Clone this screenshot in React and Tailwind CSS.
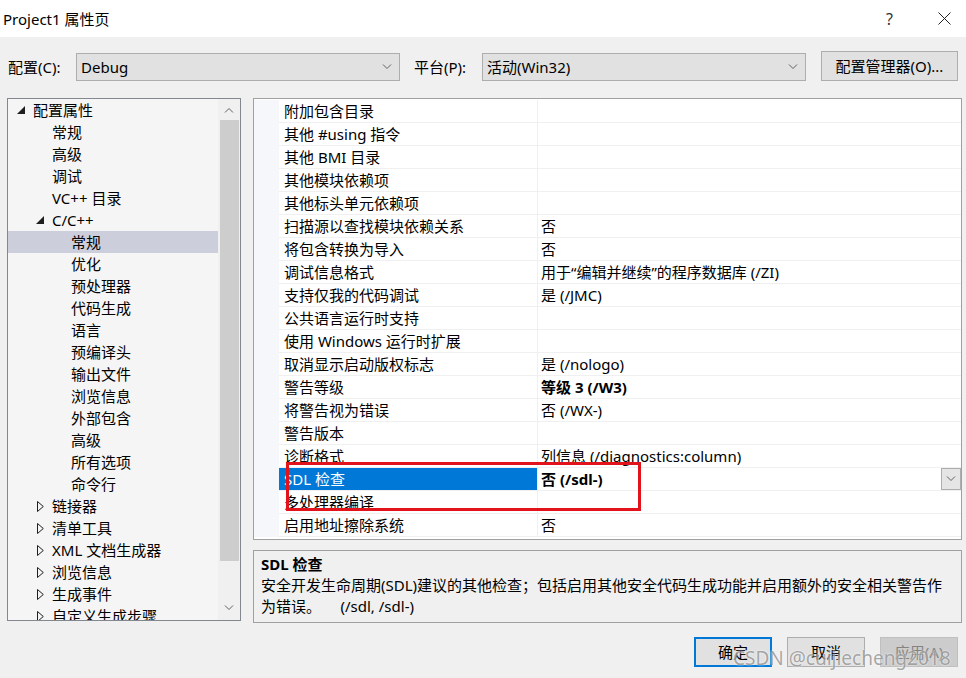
import React from 'react';

const FONT = "font-['Noto_Sans','Noto_Sans_CJK_SC',sans-serif]";

const tree = [
  { t: '配置属性', lvl: 0, icon: 'open' },
  { t: '常规', lvl: 1 },
  { t: '高级', lvl: 1 },
  { t: '调试', lvl: 1 },
  { t: 'VC++ 目录', lvl: 1 },
  { t: 'C/C++', lvl: 1, icon: 'open' },
  { t: '常规', lvl: 2, sel: true },
  { t: '优化', lvl: 2 },
  { t: '预处理器', lvl: 2 },
  { t: '代码生成', lvl: 2 },
  { t: '语言', lvl: 2 },
  { t: '预编译头', lvl: 2 },
  { t: '输出文件', lvl: 2 },
  { t: '浏览信息', lvl: 2 },
  { t: '外部包含', lvl: 2 },
  { t: '高级', lvl: 2 },
  { t: '所有选项', lvl: 2 },
  { t: '命令行', lvl: 2 },
  { t: '链接器', lvl: 1, icon: 'closed' },
  { t: '清单工具', lvl: 1, icon: 'closed' },
  { t: 'XML 文档生成器', lvl: 1, icon: 'closed' },
  { t: '浏览信息', lvl: 1, icon: 'closed' },
  { t: '生成事件', lvl: 1, icon: 'closed' },
  { t: '自定义生成步骤', lvl: 1, icon: 'closed' },
];

const props = [
  ['附加包含目录', ''],
  ['其他 #using 指令', ''],
  ['其他 BMI 目录', ''],
  ['其他模块依赖项', ''],
  ['其他标头单元依赖项', ''],
  ['扫描源以查找模块依赖关系', '否'],
  ['将包含转换为导入', '否'],
  ['调试信息格式', '用于“编辑并继续”的程序数据库 (/ZI)'],
  ['支持仅我的代码调试', '是 (/JMC)'],
  ['公共语言运行时支持', ''],
  ['使用 Windows 运行时扩展', ''],
  ['取消显示启动版权标志', '是 (/nologo)'],
  ['警告等级', '等级 3 (/W3)', true],
  ['将警告视为错误', '否 (/WX-)'],
  ['警告版本', ''],
  ['诊断格式', '列信息 (/diagnostics:column)'],
  ['SDL 检查', '否 (/sdl-)', true, true],
  ['多处理器编译', ''],
  ['启用地址擦除系统', '否'],
];

const pad = { 0: 'pl-[9px]', 1: 'pl-[28px]', 2: 'pl-[47px]' };

const Chevron = ({ up = false }) => (
  <svg width="10" height="6" viewBox="0 0 10 6">
    <path d={up ? 'M1 5.5L5 1.5L9 5.5' : 'M1 0.5L5 4.5L9 0.5'} fill="none" stroke="#606060" strokeWidth="1" />
  </svg>
);

const TreeIcon = ({ kind }) => {
  if (kind === 'open')
    return (
      <svg width="8" height="8" viewBox="0 0 8 8">
        <path d="M8 0V8H0Z" fill="#1e1e1e" />
      </svg>
    );
  if (kind === 'closed')
    return (
      <svg width="7" height="11" viewBox="0 0 7 11" className="ml-[1px]">
        <path d="M0.5 0.5L6.3 5.5L0.5 10.5Z" fill="none" stroke="#1e1e1e" strokeWidth="1" />
      </svg>
    );
  return null;
};

const Combo = ({ value }) => (
  <div className="flex h-[28px] w-[324px] items-center justify-between border border-[#adadad] bg-[#e1e1e1] pl-[4px] pr-[7px]">
    <span>{value}</span>
    <Chevron />
  </div>
);

export default function App() {
  return (
    <div className={`relative h-[678px] w-[966px] overflow-hidden bg-[#f0f0f0] text-[15px] text-black ${FONT}`}>
      {/* title bar */}
      <div className="flex h-[37px] items-center justify-between bg-white pl-[3px] pr-[15px]">
        <span className="leading-[20px]">Project1 属性页</span>
        <div className="flex items-center gap-[45px]">
          <span className="text-[16px] text-[#333]">?</span>
          <svg width="13" height="13" viewBox="0 0 13 13">
            <path d="M0.5 0.5L12.5 12.5M12.5 0.5L0.5 12.5" stroke="#222" strokeWidth="1" />
          </svg>
        </div>
      </div>

      {/* configuration row */}
      <div className="mt-[14px] flex h-[30px] items-end pl-[8px]">
        <div className="flex h-[28px] w-[68px] items-center">配置(C):</div>
        <Combo value="Debug" />
        <div className="ml-[14px] flex h-[28px] w-[68px] items-center">平台(P):</div>
        <Combo value="活动(Win32)" />
        <button className="ml-[15px] h-[30px] w-[137px] border border-[#adadad] bg-[#e1e1e1]">配置管理器(O)...</button>
      </div>

      {/* main */}
      <div className="mt-[17px] flex">
        {/* tree */}
        <div className="ml-[7px] flex h-[523px] w-[234px] overflow-hidden border border-[#828790] bg-[#f5f5f5]">
          <div className="w-[210px] overflow-hidden">
            {tree.map((n, i) => (
              <div
                key={i}
                className={`flex h-[22px] shrink-0 items-center whitespace-nowrap leading-[22px] ${pad[n.lvl]} ${n.sel ? 'bg-[#cccedb]' : ''}`}
              >
                <span className="flex w-[16px] items-center">
                  <TreeIcon kind={n.icon} />
                </span>
                <span>{n.t}</span>
              </div>
            ))}
          </div>
          <div className="flex w-[22px] flex-col items-center bg-[#f0f0f0]">
            <div className="flex h-[21px] items-center justify-center">
              <Chevron up />
            </div>
            <div className="h-[441px] w-[19px] bg-[#cdcdcd]" />
            <div className="flex flex-1 items-end justify-center pb-[9px]">
              <Chevron />
            </div>
          </div>
        </div>

        {/* right column */}
        <div className="ml-[12px] flex w-[709px] flex-col">
          <div className="h-[442px] border border-[#a0a0a0] bg-white pt-[1px]">
            {props.map(([name, value, bold, sel], i) => (
              <div key={i} className="flex h-[23px]">
                <div className="w-[25px] bg-[#f5f7fa]" />
                <div
                  className={`flex w-[259px] items-center border-b border-r border-[#f0f0f0] pl-[5px] whitespace-nowrap ${sel ? 'bg-[#0078d7] text-white' : ''}`}
                >
                  {name}
                </div>
                <div className="flex flex-1 items-center justify-between border-b border-[#f0f0f0] pl-[3px] whitespace-nowrap">
                  <span className={bold ? 'font-bold' : ''}>{value}</span>
                  {sel && (
                    <div className="flex h-[22px] w-[20px] items-center justify-center border border-[#adadad] bg-[#e5e5e5]">
                      <Chevron />
                    </div>
                  )}
                </div>
              </div>
            ))}
          </div>

          <div className="mt-[10px] h-[73px] border border-[#a0a0a0] px-[7px] pt-[3px] leading-[21px]">
            <div className="font-bold">SDL 检查</div>
            <div className="whitespace-nowrap">安全开发生命周期(SDL)建议的其他检查；包括启用其他安全代码生成功能并启用额外的安全相关警告作</div>
            <div className="whitespace-pre">为错误。     (/sdl, /sdl-)</div>
          </div>
        </div>
      </div>

      {/* buttons */}
      <div className="mt-[14px] flex justify-end gap-[15px] pr-[8px]">
        <button className="h-[30px] w-[78px] border-2 border-[#0078d7] bg-[#e1e1e1]">确定</button>
        <button className="h-[30px] w-[78px] border border-[#adadad] bg-[#e1e1e1]">取消</button>
        <button className="h-[30px] w-[78px] border border-[#bfbfbf] bg-[#cccccc] text-[#838383]">应用(A)</button>
      </div>

      {/* highlight box */}
      <div className="absolute left-[286px] top-[462px] h-[49px] w-[355px] border-[3px] border-[#e3131b]" />

      {/* watermark */}
      <div className="absolute left-[733px] top-[644px] whitespace-nowrap text-[19px] text-[rgba(110,110,110,0.6)] [text-shadow:0_0_2px_#fff]">
        CSDN @cuijiecheng2018
      </div>
    </div>
  );
}
